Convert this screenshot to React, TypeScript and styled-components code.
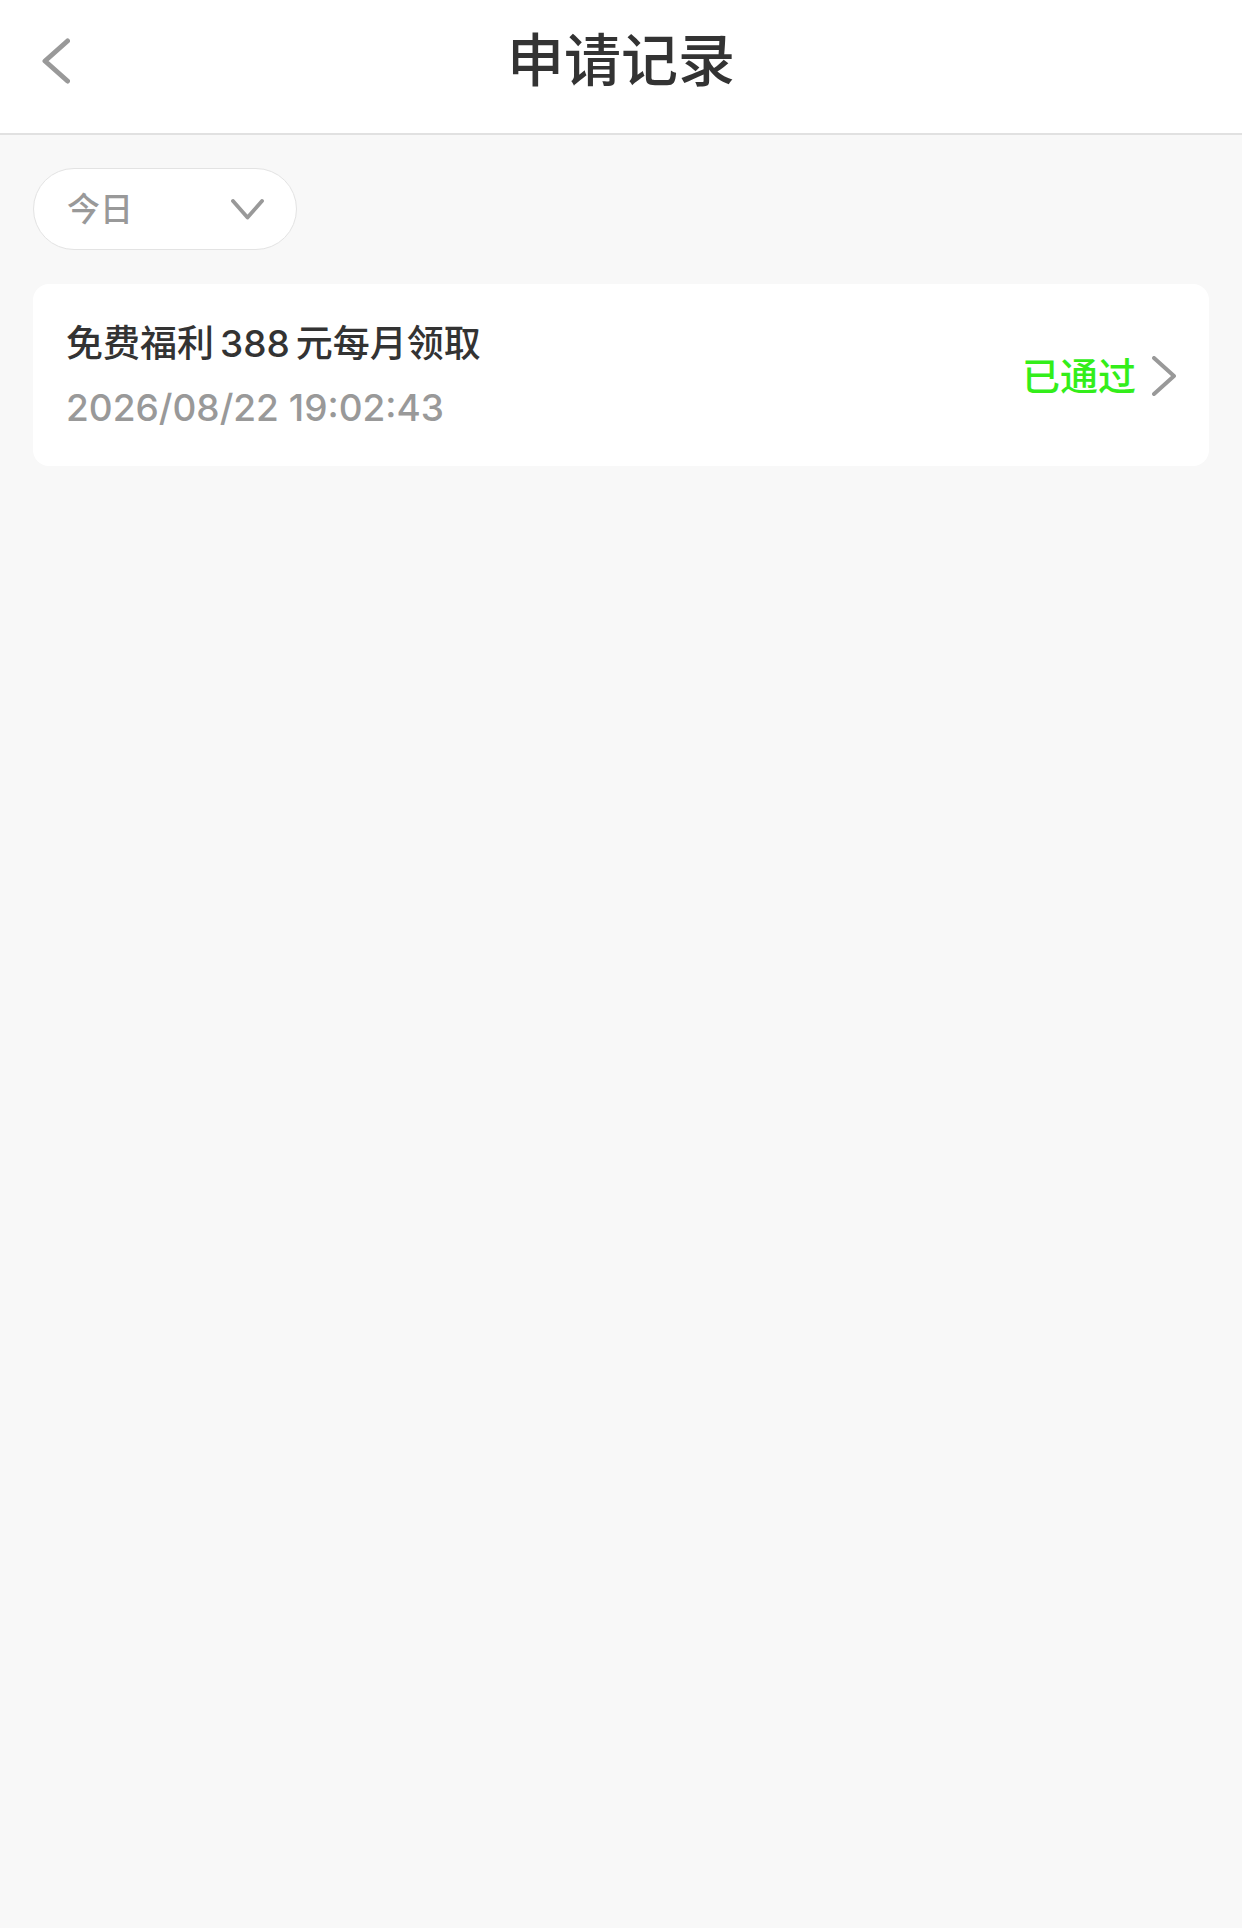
import { useState } from 'react';
import styled, { createGlobalStyle } from 'styled-components';

const GlobalStyle = createGlobalStyle`
    * {
        box-sizing: border-box;
    }

    body {
        margin: 0;
        background-color: #f8f8f8;
        font-family: Inter, 'Noto Sans CJK SC', sans-serif;
        font-weight: 500;
        color: #333333;
    }
`;

const Page = styled.div`
    min-height: 100vh;
    background-color: #f8f8f8;
`;

const Header = styled.header`
    display: grid;
    grid-template-columns: 80px 1fr 80px;
    align-items: center;
    padding: 21px 16px 32px;
    background-color: #ffffff;
    border-bottom: 2px solid #e1e1e1;
`;

const BackButton = styled.button`
    display: flex;
    align-items: center;
    justify-content: center;
    width: 80px;
    height: 80px;
    padding: 0;
    border: none;
    background: none;
    cursor: pointer;
`;

const Title = styled.h1`
    margin: 0;
    font-size: 57px;
    line-height: 80px;
    font-weight: 500;
    text-align: center;
`;

const Content = styled.main`
    display: flex;
    flex-direction: column;
    align-items: flex-start;
    gap: 34px;
    padding: 33px;
`;

const Filter = styled.label`
    display: grid;
    align-items: center;
    width: 264px;
    height: 82px;

    > * {
        grid-area: 1 / 1;
    }

    > svg {
        justify-self: end;
        margin-right: 33px;
        pointer-events: none;
    }
`;

const FilterSelect = styled.select`
    appearance: none;
    width: 100%;
    height: 100%;
    padding: 0 80px 0 33px;
    border: 1px solid #e3e3e3;
    border-radius: 41px;
    background-color: #ffffff;
    font: inherit;
    font-size: 33px;
    color: #999999;
`;

const RecordList = styled.ul`
    display: flex;
    flex-direction: column;
    gap: 34px;
    width: 100%;
    margin: 0;
    padding: 0;
    list-style: none;
`;

const RecordLink = styled.a`
    display: flex;
    align-items: center;
    justify-content: space-between;
    padding: 28px 33px 26px;
    border-radius: 16px;
    background-color: #ffffff;
    color: inherit;
    text-decoration: none;
`;

const RecordName = styled.div`
    font-size: 37px;
    line-height: 64px;
`;

const Amount = styled.span`
    margin: 0 6px;
`;

const RecordTime = styled.time`
    display: block;
    font-size: 37px;
    line-height: 64px;
    color: #999999;
`;

const Status = styled.div`
    display: flex;
    align-items: center;
    gap: 16px;
    font-size: 38px;
    line-height: 64px;
    color: #33ee1a;
`;

const icons = {
    left: { w: 28, h: 46, d: 'M25.5 3 L3 23 L25.5 43', stroke: 5 },
    right: { w: 24, h: 40, d: 'M2 2 L22 20 L2 38', stroke: 4 },
    down: { w: 33, h: 21, d: 'M2 2 L16.5 18.5 L31 2', stroke: 3.8 },
};

const Chevron = ({ direction }: { direction: keyof typeof icons }) => {
    const { w, h, d, stroke } = icons[direction];
    return (
        <svg width={w} height={h} viewBox={`0 0 ${w} ${h}`} fill="none" aria-hidden="true">
            <path d={d} stroke="#999999" strokeWidth={stroke} strokeLinecap="round" strokeLinejoin="round" />
        </svg>
    );
}

const records = [
    { id: 1, name: '免费福利', amount: 388, suffix: '元每月领取', time: '2026/08/22 19:02:43', status: '已通过' },
];

const App = () => {
    const [range, setRange] = useState('today');

    return (
        <Page>
            <GlobalStyle />
            <Header>
                <BackButton type="button" aria-label="返回">
                    <Chevron direction="left" />
                </BackButton>
                <Title>申请记录</Title>
            </Header>
            <Content>
                <Filter>
                    <FilterSelect aria-label="日期" value={range} onChange={(e) => setRange(e.target.value)}>
                        <option value="today">今日</option>
                    </FilterSelect>
                    <Chevron direction="down" />
                </Filter>
                <RecordList>
                    {records.map((r) => (
                        <li key={r.id}>
                            <RecordLink href="#">
                                <div>
                                    <RecordName>{r.name}<Amount>{r.amount}</Amount>{r.suffix}</RecordName>
                                    <RecordTime>{r.time}</RecordTime>
                                </div>
                                <Status>
                                    {r.status}
                                    <Chevron direction="right" />
                                </Status>
                            </RecordLink>
                        </li>
                    ))}
                </RecordList>
            </Content>
        </Page>
    );
}

export default App;
